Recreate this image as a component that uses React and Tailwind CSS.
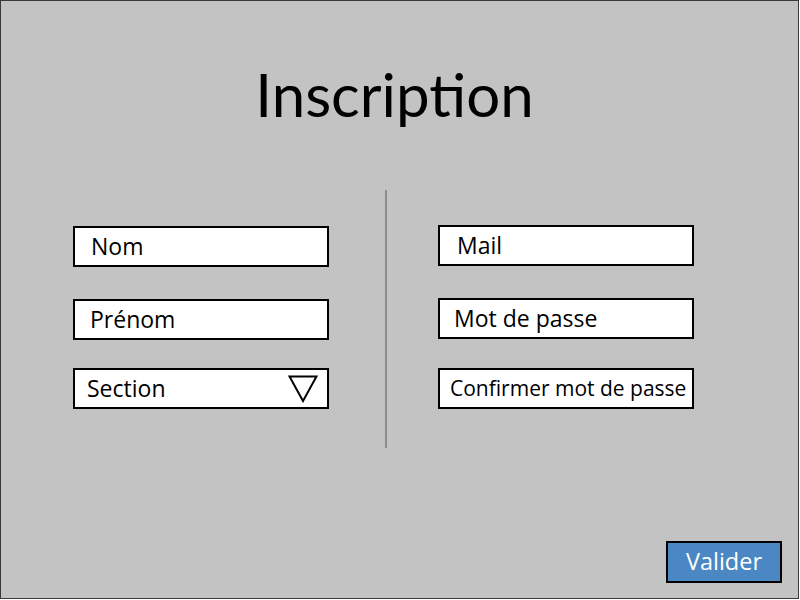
import React from "react";

const sans = { fontFamily: "'Open Sans', 'Noto Sans', sans-serif" };
const titleFont = { fontFamily: "Lato, 'Open Sans', sans-serif" };

function Field({ label, className = "", textClass = "" }) {
    return (
        <div className={`w-[256px] h-[41px] bg-white border-2 border-black flex items-center ${className}`}>
            <span className={`text-black leading-none ${textClass}`}>{label}</span>
        </div>
    );
}

export default function App() {
    return (
        <div
            className="w-[799px] h-[599px] bg-[#c3c3c3] border border-[#3a3a3a] flex flex-col"
            style={sans}
        >
            {/* Title */}
            <div className="h-[189px] flex justify-center pt-[63px] pr-[10px]">
                <h1 className="text-[60px] leading-none text-black" style={titleFont}>Inscription</h1>
            </div>

            {/* Form */}
            <div className="flex items-start pl-[72px]">
                <div className="flex flex-col mt-[36px]">
                    <Field label="Nom" textClass="text-[23px] pl-[16px]" />
                    <Field label="Prénom" className="mt-[32px]" textClass="text-[23px] pl-[15px]" />
                    <div className="w-[256px] h-[41px] bg-white border-2 border-black flex items-center justify-between mt-[28px] pl-[12px] pr-[9px]">
                        <span className="text-[23px] leading-none text-black">Section</span>
                        <svg width="30" height="28" viewBox="0 0 30 28">
                            <path d="M1.5 1.5 H28.5 L15 26 Z" fill="none" stroke="black" strokeWidth="2" strokeLinejoin="miter" />
                        </svg>
                    </div>
                </div>

                <div className="w-[2px] h-[258px] bg-[#8c8c8c] ml-[56px]" />

                <div className="flex flex-col mt-[35px] ml-[51px]">
                    <Field label="Mail" textClass="text-[23px] pl-[17px]" />
                    <Field label="Mot de passe" className="mt-[32px]" textClass="text-[23px] pl-[14px]" />
                    <Field label="Confirmer mot de passe" className="mt-[29px]" textClass="text-[21px] pl-[10px]" />
                </div>
            </div>

            {/* Submit */}
            <div className="mt-auto flex justify-end pr-[16px] pb-[15px]">
                <button className="w-[116px] h-[42px] bg-[#4a87c3] border-2 border-black text-white text-[23.5px] flex items-center justify-center">
                    Valider
                </button>
            </div>
        </div>
    );
}
